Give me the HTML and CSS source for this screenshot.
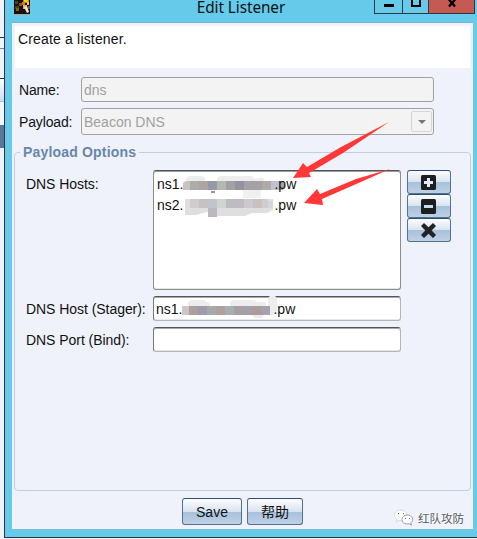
FILE: index.html
```html
<!DOCTYPE html>
<html lang="en">
<head>
<meta charset="utf-8">
<title>Edit Listener</title>
<link rel="stylesheet" href="styles.css">
</head>
<body>
<div class="desktop">
  <div class="backdrop"><i></i><i></i><i></i><i></i><i></i></div>
  <main class="window">
    <header class="titlebar">
      <svg class="app-icon" width="16" height="15" viewBox="0 0 16 15">
        <path fill="#17120e" d="M0 0h16v14H0z"/>
        <path fill="#4b4030" d="M1 1h3v3H1zM1 6h4v3H1z"/>
        <path fill="#8a5a18" d="M5 3h3v3H5zM2 8h3v3H2z"/>
        <path fill="#d77b0d" d="M9 0h6v3H9zM8 2h3v3H8z"/>
        <path fill="#f5cf25" d="M10 0h4v2h-4zM13 2h2v3h-2z"/>
        <path fill="#d9a886" d="M9 5h4v4H9z"/>
        <path fill="#f0e4d2" d="m10 7 3-1 2 6-2 1z"/>
        <path fill="#b2343d" d="M14 6h2v3h-2z"/>
        <path fill="#a9a49f" d="M0 14h16v1H0z"/>
      </svg>
      <h1>Edit Listener</h1>
      <div class="controls">
        <span class="ctl"><svg width="10" height="13"><path d="M0 4h10v3H0z"/></svg></span>
        <span class="ctl max"><svg width="10" height="13"><path fill="none" stroke="#000" stroke-width="2" d="M1-1h8v7H1z"/></svg></span>
        <span class="ctl close"><svg width="10" height="13"><path fill="none" stroke="#000" stroke-width="2.3" d="M1.5-1 8 6.5M8.5-1 2 6.5"/></svg></span>
      </div>
    </header>
    <section class="content">
      <p class="description">Create a listener.</p>
      <div class="form">
        <label>Name:</label><div class="field disabled">dns</div>
        <label>Payload:</label><div class="field disabled combo">Beacon DNS<span class="drop"></span></div>
      </div>
      <fieldset>
        <legend>Payload Options</legend>
        <div class="options">
          <label class="top">DNS Hosts:</label>
          <div class="list">
            <div>ns1.<svg class="mask" width="91" height="16" viewBox="0 0 91 16"><g><path fill="#ededed" d="M3 4V1l3-2h12l4 2v3zM34 4V1l3-2h32l3 3 4-1h4l2 3z"/><path fill="#f1f0f0" d="M60 13h18v8H60z"/><path d="M28 15h4" stroke="#333"/><path fill="#c7c5c4" d="M0 6l3-2h4v9H0z"/><path fill="#adacab" d="M7 4h9v9H7z"/><path fill="#ada39f" d="M16 4h9v9h-9z"/><path fill="#9998a7" d="M25 4h9v9h-9z"/><path fill="#b1b8ae" d="M34 4h9v9h-9z"/><path fill="#a3a0a4" d="M43 4h9v9h-9z"/><path fill="#9491a0" d="M52 4h9v9h-9z"/><path fill="#a5a2a5" d="M61 4h18v9H61z"/><path fill="#b1aaa3" d="M79 4h9v9h-9z"/><path fill="#bfc2d0" d="M88 4h9v9h-9z"/><path fill="#aaa7a6" d="M97 4h3l2 4-2 5h-3z"/></g></svg>.pw</div>
            <div>ns2.<svg class="mask" width="91" height="16" viewBox="0 0 91 16"><g><path fill="#e0dfdf" d="M2 1h88v11l-6 3H69l-7 3H25v-4l-6 1-5 2H2z"/><path fill="#cfcccc" d="M7 1h9v9H7z"/><path fill="#c8c1c1" d="M16 1h9v9h-9zM70 1h9v9h-9z"/><path fill="#c3c3ca" d="M25 1h9v9h-9z"/><path fill="#bbb9bf" d="M25 10h9v9h-9z"/><path fill="#ced5cf" d="M34 1h9v9h-9z"/><path fill="#bfbcc1" d="M43 1h18v9H43z"/><path fill="#ccc8cb" d="M61 1h9v9h-9z"/><path fill="#d1cdc8" d="M79 1h6v9h-6z"/><path fill="#d5d5df" d="M85 3h5v7h-5z"/></g></svg>.pw</div>
          </div>
          <div class="tools">
            <button><svg width="16" height="15"><rect width="15" height="15" rx="1.5" fill="#1d1e20"/><path fill="#e0ebf6" d="M6 3h3v3h3v3H9v3H6V9H3V6h3z"/></svg></button>
            <button><svg width="16" height="15"><rect width="15" height="15" rx="1.5" fill="#1d1e20"/><path fill="#c9dbec" d="M3 6h9v3H3z"/></svg></button>
            <button><svg width="16" height="15"><path fill="#222325" d="m3 0 4.5 4.3L12 0l3 3-4.3 4.5L15 12l-3 3-4.5-4.3L3 15l-3-3 4.3-4.5L0 3z"/></svg></button>
          </div>
          <label>DNS Host (Stager):</label>
          <div class="field">ns1.<svg class="mask" width="91" height="16" viewBox="0 0 91 16"><g><path fill="#ededed" d="M6 4V0l4-2h12l3 2 3 1v3zM48 4V0l3-2h20l4 2h9v4zM86-4l2-2h5l2 2V8l-3 5h-6zM69 12h14l-3 4h-7z"/><path fill="#c9c8cb" d="M0 4h7v9H0z"/><path fill="#ad9f9d" d="M7 4h9v9H7z"/><path fill="#9e9cac" d="M16 4h9v9h-9z"/><path fill="#a5aaaa" d="M25 4h9v9h-9z"/><path fill="#afa19e" d="M34 4h9v9h-9z"/><path fill="#a7afb2" d="M43 4h9v9h-9z"/><path fill="#a4a0a6" d="M52 4h18v9H52z"/><path fill="#ac9c9b" d="M70 4h9v9h-9z"/><path fill="#a4a2ac" d="M79 4h9v9h-9z"/></g></svg>.pw</div>
          <label class="last">DNS Port (Bind):</label>
          <div class="field last"></div>
        </div>
      </fieldset>
      <footer><button class="save">Save</button><button class="help">帮助</button></footer>
    </section>
  </main>
  <svg class="arrows" width="477" height="539" viewBox="0 0 477 539">
    <path fill="#ff3837" d="m293 178 10-15 4 4 34-20 48-25-46 31-34 20 2 4zM304 203l13-14 3 5 36-15 34-10-36 16-32 14 1 6z"/>
  </svg>
  <div class="watermark">
    <svg width="20" height="17" viewBox="0 0 20 17">
      <path fill="#fff" stroke="#c6c7cb" stroke-width=".6" d="M7 1C3 1 .5 3.4.5 6.2q0 2.5 2.4 4L2.4 13l2.4-1.5Q9 12.3 11.5 10q2-2 1.5-5Q11.5 1 7 1z"/>
      <path fill="#fff" stroke="#77797c" stroke-width=".7" d="M13 6c-3 0-5 2-5 4.5S10 15 13 15l2-.3 2.4 1.4-.6-2.3c4-3 1.4-7.8-3.8-7.8z"/>
      <path fill="#666" d="M4 4h1v1H4zM9 4h1v1H9zM11 9h1v1h-1zM15 9h1v1h-1z"/>
    </svg>
    <span>红队攻防</span>
  </div>
</div>
</body>
</html>
```
FILE: styles.css
```css
* { box-sizing: border-box; }
body { margin: 0; font: 14px/18px "Liberation Sans", "Noto Sans CJK SC", sans-serif; color: #111; }
.desktop { position: relative; width: 477px; height: 539px; overflow: hidden; display: flex; background: #eff2fa; }
.backdrop { width: 4px; flex: none; display: flex; flex-direction: column; }
.backdrop i { border-bottom: 1px solid #333; height: 38px; }
.backdrop i:nth-child(2) { height: 11px; border-color: #6888a8; }
.backdrop i:nth-child(3) { height: 30px; }
.backdrop i:nth-child(4) { height: 23px; border-color: #a9c3dd; background: linear-gradient(#fff, #cbdcf0); }
.backdrop i:nth-child(5) { height: 46px; border: 0; background: linear-gradient(#f4f6fb 23px, #5b7797 23px); }
.window { width: 473px; height: 538px; border: solid #2d3540; border-width: 0 0 1px 1px; background: #66caea; padding: 0 4px 7px 7px; display: flex; flex-direction: column; }
.titlebar { height: 22px; flex: none; display: grid; grid-template-columns: 90px 1fr 99px; align-items: start; }
.app-icon { margin-left: 2px; }
h1 { margin: 0; font: 15.4px/16px "Noto Sans", sans-serif; letter-spacing: -.1px; text-align: center; padding-left: 6px; white-space: nowrap; }
.controls { display: flex; height: 14px; border: 1px solid #2e3a42; border-top: 0; margin-right: -2px; }
.ctl { width: 28px; height: 13px; display: flex; justify-content: center; border-right: 1px solid #2e3a42; }
.ctl.max { width: 26px; }
.ctl.close { flex: 1; background: #c45a51; border: 0; }
.content { flex: 1; min-height: 0; background: #eff2fa; border-top: 1px solid #78b2d0; border-bottom: 1px solid #83bdd5; padding: 3px 2px 0; display: flex; flex-direction: column; }
.description { margin: 0 1px; height: 42px; flex: none; background: #fff; padding: 4px 3px; letter-spacing: .17px; }
.form { display: grid; grid-template-columns: 62px 353px; grid-template-rows: 25px 27px; row-gap: 6px; margin: 9px 0 0 5px; align-items: center; }
label { white-space: nowrap; letter-spacing: -.05px; }
.form label { letter-spacing: -.15px; }
.field { height: 25px; align-self: stretch; border: 1px solid #b5b5b5; border-top: 1px solid #555; border-left-color: #777; border-radius: 3px; background: #fff; box-shadow: inset 0 1px #a9a9a9, inset 0 -1px #e8e8e8; padding: 3px 2px 2px; line-height: 18px; white-space: nowrap; }
.disabled { color: #a1a1a1; background: #f3f3f3; border: 1px solid #a1a1a1; box-shadow: none; padding: 3px 2px 2px; }
.combo { height: 27px; display: flex; justify-content: space-between; align-items: center; padding: 2px 1px 2px 2px; }
.drop { width: 21px; height: 21px; border: 1px solid #d6d6d6; border-radius: 2px; display: flex; align-items: center; justify-content: center; }
.drop::after { content: ""; border: 4px solid transparent; border-top-color: #777; border-bottom: 0; }
fieldset { min-width: 0; width: 457px; height: 347px; margin: 9px 0 0; border: 1px solid #bfcfe2; border-radius: 4px; padding: 0 0 0 11px; }
legend { font-weight: 700; color: #6787ac; letter-spacing: .18px; padding: 0 3px; margin-left: -6px; height: 16px; line-height: 16px; }
.options { display: grid; grid-template-columns: 127px 248px 50px; grid-template-rows: 120px 25px 25px; row-gap: 6px; align-items: center; padding-top: 10px; }
.top { align-self: start; padding-top: 5px; }
.list { height: 120px; background: #fff; border: 1px solid #8c8c8c; border-top-color: #555; border-radius: 3px; padding: 3px; line-height: 21px; box-shadow: inset 0 1px #999, inset 0 -1px #e4e4e4; }
.list div { height: 21px; white-space: nowrap; }
.mask { overflow: visible; vertical-align: -4px; }
.tools { align-self: start; width: 44px; margin-left: 6px; display: flex; flex-direction: column; }
.options > label { grid-column: 1; }
button { appearance: none; margin: 0; padding: 0; font: inherit; color: #111; border: 1px solid #54718e; border-top-color: #2e4f73; border-radius: 3px; background: linear-gradient(#fdfdff 0%, #d8e3ef 50%, #a8c0da 51%, #bdd1e6 100%); }
.tools button { height: 24px; display: flex; align-items: center; justify-content: center; padding-top: 1px; }
footer { display: flex; gap: 5px; margin: 7px 0 0 168px; }
footer button { height: 27px; width: 60px; }
footer .help { width: 56px; }
.arrows { position: absolute; inset: 0; }
.watermark { position: absolute; left: 394px; top: 509px; display: flex; gap: 4px; font: 11.5px/18px "Noto Sans CJK SC", sans-serif; color: #55585c; text-shadow: -1px -1px #fff; }
```
